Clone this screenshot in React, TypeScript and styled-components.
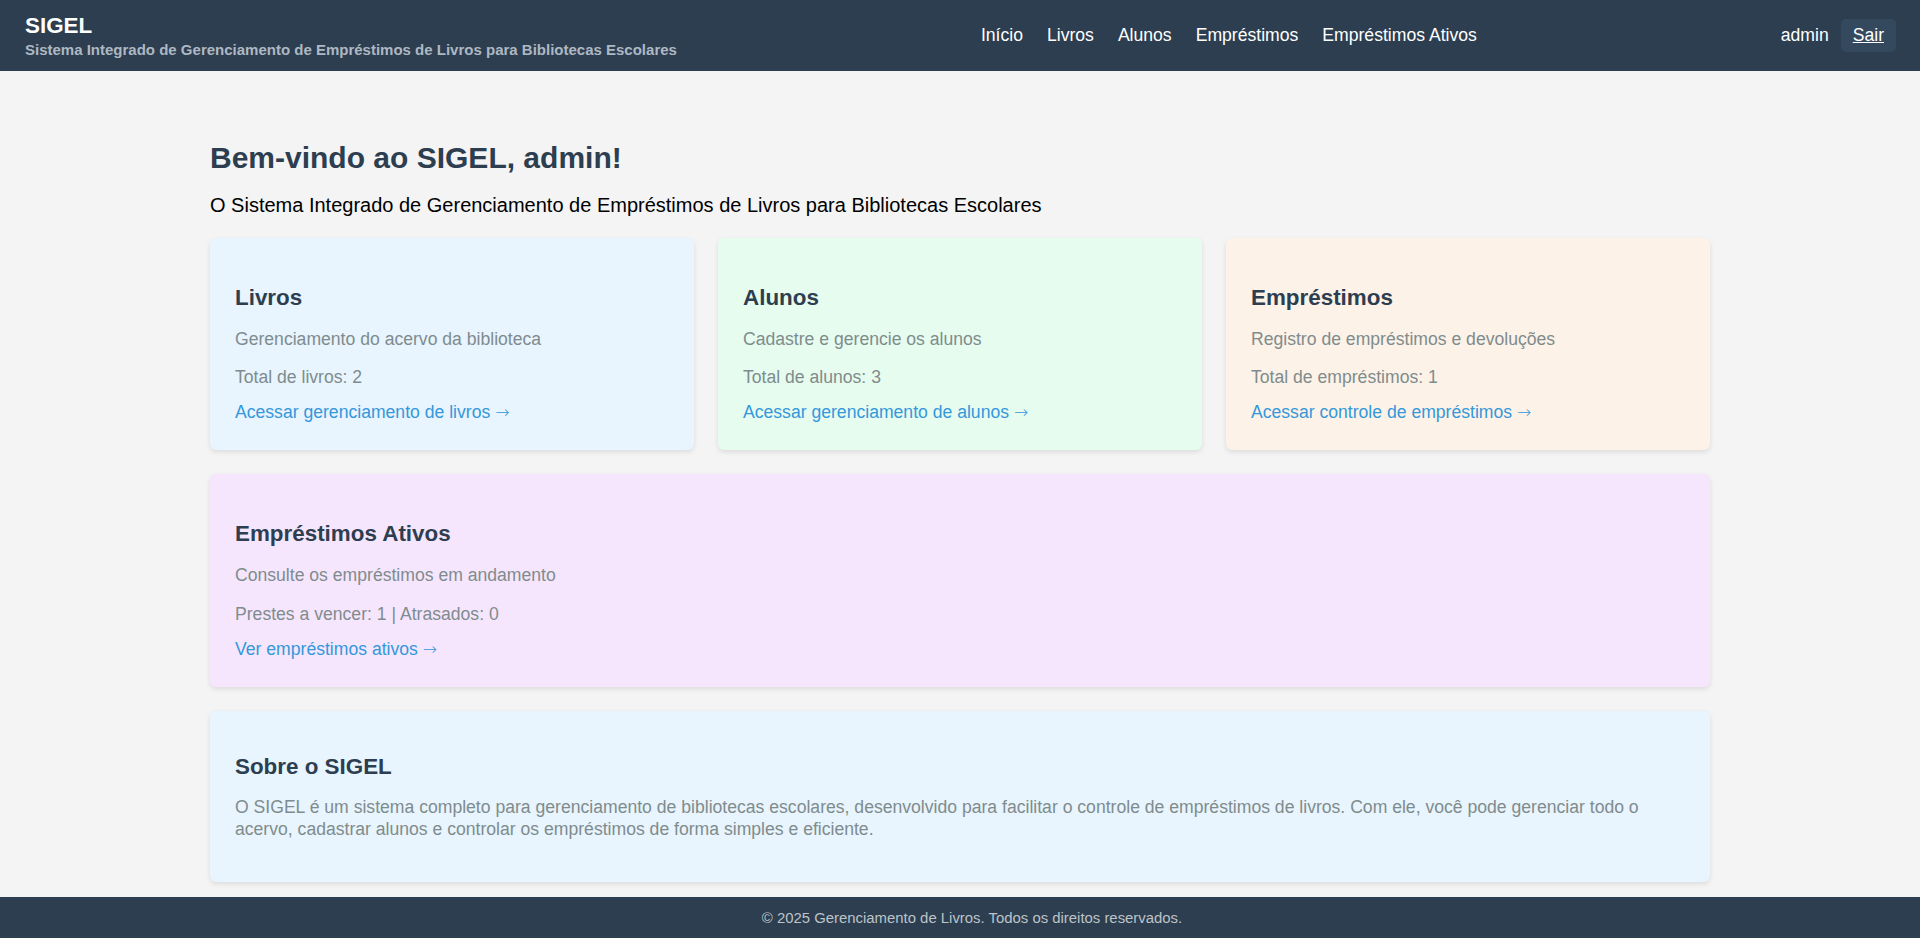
import React from "react";
import styled, { createGlobalStyle } from "styled-components";

const GlobalStyle = createGlobalStyle`
  html, body {
    margin: 0;
    padding: 0;
  }
  body {
    background: #f4f4f4;
    font-family: "Liberation Sans", Arial, Helvetica, sans-serif;
    color: #000;
  }
  * { box-sizing: border-box; }
`;

const Page = styled.div`
  min-height: 100vh;
  display: flex;
  flex-direction: column;
`;

const Header = styled.header`
  background: #2c3e50;
  padding: 13px 24px 13px 25px;
  display: flex;
  align-items: center;
  justify-content: space-between;
`;

const Brand = styled.div`
  display: flex;
  flex-direction: column;
`;

const Logo = styled.div`
  color: #fff;
  font-size: 22.4px;
  font-weight: 700;
  line-height: 25.7px;
`;

const Tagline = styled.div`
  color: #aeb8c3;
  font-size: 15px;
  font-weight: 700;
  line-height: 17.2px;
  margin-top: 2px;
`;

const Nav = styled.nav`
  display: flex;
  align-items: center;
  gap: 24px;
`;

const NavLink = styled.a`
  color: #fff;
  text-decoration: none;
  font-size: 17.6px;
  line-height: 20.2px;
`;

const UserArea = styled.div`
  display: flex;
  align-items: center;
  gap: 12px;
`;

const UserName = styled.span`
  color: #fff;
  font-size: 17.6px;
  line-height: 20.2px;
`;

const LogoutButton = styled.button`
  background: #34495e;
  color: #fff;
  border: none;
  border-radius: 5px;
  padding: 6.4px 12px;
  font-family: inherit;
  font-size: 17.6px;
  line-height: 20.2px;
  text-decoration: underline;
  cursor: pointer;
`;

const Main = styled.main`
  flex: 1;
  padding: 70px 0 15px;
`;

const Container = styled.div`
  width: 100%;
  max-width: 1500px;
  margin: 0 auto;
`;

const Title = styled.h1`
  margin: 0;
  color: #2c3e50;
  font-size: 30px;
  font-weight: 700;
  line-height: 34.5px;
`;

const Lead = styled.p`
  margin: 18.3px 0 0;
  font-size: 20px;
  line-height: 23px;
  color: #000;
`;

const CardGrid = styled.div`
  margin-top: 21.1px;
  display: grid;
  grid-template-columns: repeat(3, 1fr);
  gap: 24px;
`;

const Card = styled.section<{ $bg: string; $wide?: boolean; $about?: boolean }>`
  background: ${(p) => p.$bg};
  border-radius: 6px;
  box-shadow: 0 2px 5px rgba(0, 0, 0, 0.1);
  padding: 24px 24px ${(p) => (p.$about ? "24px" : "27.6px")} 25px;
  grid-column: ${(p) => (p.$wide ? "1 / -1" : "auto")};
`;

const CardTitle = styled.h3<{ $about?: boolean }>`
  margin: ${(p) => (p.$about ? "19.5px 0 17.3px" : "22.9px 0 18.6px")};
  color: #2c3e50;
  font-size: 22.4px;
  font-weight: 700;
  line-height: 25.74px;
`;

const CardText = styled.p<{ $gap?: number; $lh?: number }>`
  margin: 0 0 ${(p) => p.$gap ?? 18}px;
  color: #7f8c8d;
  font-size: 17.6px;
  line-height: ${(p) => p.$lh ?? 20.22}px;
`;

const CardLink = styled.a`
  display: block;
  color: #3498db;
  text-decoration: none;
  font-size: 17.6px;
  line-height: 20.22px;
`;

const Arrow = styled.span`
  font-family: "DejaVu Sans", sans-serif;
  font-size: 17px;
  font-weight: 300;
`;

const Footer = styled.footer`
  background: #2c3e50;
  color: #bdc3c7;
  text-align: center;
  font-size: 14.9px;
  line-height: 17.2px;
  padding: 12.4px 0 12.4px 24px;
`;

type Feature = {
  title: string;
  desc: string;
  stat: string;
  link: string;
  bg: string;
  wide?: boolean;
};

const features: Feature[] = [
  {
    title: "Livros",
    desc: "Gerenciamento do acervo da biblioteca",
    stat: "Total de livros: 2",
    link: "Acessar gerenciamento de livros",
    bg: "#e8f4fe",
  },
  {
    title: "Alunos",
    desc: "Cadastre e gerencie os alunos",
    stat: "Total de alunos: 3",
    link: "Acessar gerenciamento de alunos",
    bg: "#e6fcef",
  },
  {
    title: "Empréstimos",
    desc: "Registro de empréstimos e devoluções",
    stat: "Total de empréstimos: 1",
    link: "Acessar controle de empréstimos",
    bg: "#fdf2e7",
  },
  {
    title: "Empréstimos Ativos",
    desc: "Consulte os empréstimos em andamento",
    stat: "Prestes a vencer: 1 | Atrasados: 0",
    link: "Ver empréstimos ativos",
    bg: "#f6e6fd",
    wide: true,
  },
];

export default function App() {
  return (
    <Page>
      <GlobalStyle />
      <Header>
        <Brand>
          <Logo>SIGEL</Logo>
          <Tagline>
            Sistema Integrado de Gerenciamento de Empréstimos de Livros para Bibliotecas Escolares
          </Tagline>
        </Brand>
        <Nav>
          <NavLink href="#">Início</NavLink>
          <NavLink href="#">Livros</NavLink>
          <NavLink href="#">Alunos</NavLink>
          <NavLink href="#">Empréstimos</NavLink>
          <NavLink href="#">Empréstimos Ativos</NavLink>
        </Nav>
        <UserArea>
          <UserName>admin</UserName>
          <LogoutButton type="button">Sair</LogoutButton>
        </UserArea>
      </Header>

      <Main>
        <Container>
          <Title>Bem-vindo ao SIGEL, admin!</Title>
          <Lead>
            O Sistema Integrado de Gerenciamento de Empréstimos de Livros para Bibliotecas Escolares
          </Lead>

          <CardGrid>
            {features.map((f) => (
              <Card key={f.title} $bg={f.bg} $wide={f.wide}>
                <CardTitle>{f.title}</CardTitle>
                <CardText>{f.desc}</CardText>
                <CardText $gap={15}>{f.stat}</CardText>
                <CardLink href="#">
                  {f.link} <Arrow>→</Arrow>
                </CardLink>
              </Card>
            ))}
            <Card $bg="#e8f4fe" $wide $about>
              <CardTitle as="h2" $about>
                Sobre o SIGEL
              </CardTitle>
              <CardText $lh={21.6}>
                O SIGEL é um sistema completo para gerenciamento de bibliotecas escolares, desenvolvido
                para facilitar o controle de empréstimos de livros. Com ele, você pode gerenciar todo o
                acervo, cadastrar alunos e controlar os empréstimos de forma simples e eficiente.
              </CardText>
            </Card>
          </CardGrid>
        </Container>
      </Main>

      <Footer>© 2025 Gerenciamento de Livros. Todos os direitos reservados.</Footer>
    </Page>
  );
}
